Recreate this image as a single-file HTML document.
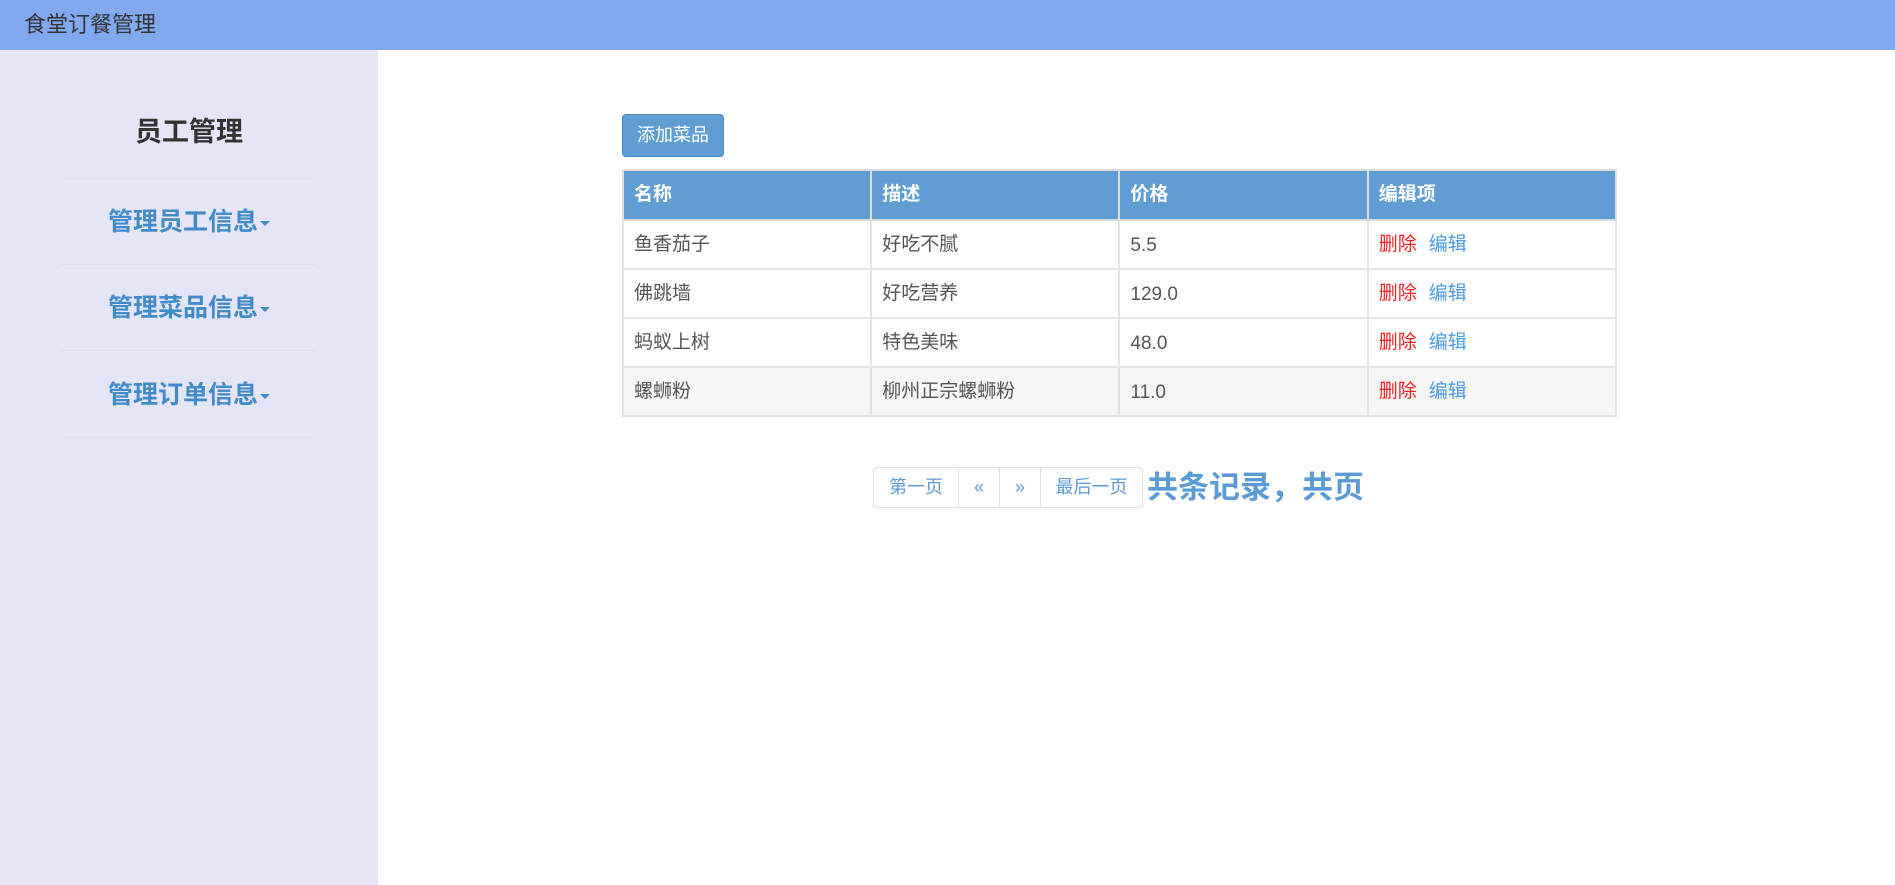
<!DOCTYPE html>
<html><head><meta charset="utf-8"><style>
*{margin:0;padding:0;box-sizing:border-box}
body{width:1895px;height:885px;overflow:hidden;background:#fff;font-family:"Liberation Sans","Noto Sans CJK SC",sans-serif;position:relative}
.hdr{position:absolute;left:0;top:0;width:1895px;height:50px;background:#82a8ef}
.hdr span{position:absolute;left:24px;top:11px;font-size:22px;color:#333;line-height:28px}
.side{position:absolute;left:0;top:50px;width:378px;height:835px;background:#e5e5f8}
.t{position:absolute;left:0;width:378px;text-align:center;font-size:27px;font-weight:bold;color:#333;line-height:36px}
.ln{position:absolute;left:61px;width:254px;height:1px;background:#dcdcef}
.nav{position:absolute;left:0;width:378px;text-align:center;font-size:25px;font-weight:bold;color:#428bca;line-height:34px}
.caret{display:inline-block;width:0;height:0;border-left:5px solid transparent;border-right:5px solid transparent;border-top:5px solid #428bca;vertical-align:middle;margin-left:2px}
.btn{position:absolute;left:622px;top:114px;width:102px;height:43px;background:#5f9dd3;border:1px solid #4a8ac4;border-radius:4px;color:#fff;font-size:18px;line-height:41px;text-align:center}
table{position:absolute;left:622px;top:169px;width:995px;border-collapse:collapse;border:2px solid #ddd;font-size:19px}
th{background:#5f9dd3;color:#fff;text-align:left;font-weight:bold;height:50px;padding:0 10px;border:2px solid #ddd;border-top:0;line-height:24px}
td{height:49px;padding:0 10px;border:2px solid #e4e4e4;color:#555;width:249px;line-height:24px;vertical-align:middle}
td.n{padding-top:3px}
tr.g td{background:#f6f6f6}
.d{color:#f22}.e{color:#4a9be8;margin-left:12px}
.pg{position:absolute;left:873px;top:467px;height:41px;display:flex;border:1px solid #ddd;border-radius:4px;font-size:18px;color:#5b9bd5}
.pg div{line-height:39px;text-align:center;border-left:1px solid #ddd}
.pg div:first-child{border-left:0}
.tot{position:absolute;left:1147px;top:468px;font-size:31px;font-weight:bold;color:#5b9bd5;line-height:40px}
</style></head><body>
<div class="hdr"><span>食堂订餐管理</span></div>
<div class="side">
<div class="t" style="top:64px">员工管理</div>
<div class="ln" style="top:128px"></div>
<div class="nav" style="top:155px">管理员工信息<span class="caret"></span></div>
<div class="ln" style="top:214px"></div>
<div class="nav" style="top:241px">管理菜品信息<span class="caret"></span></div>
<div class="ln" style="top:300px"></div>
<div class="nav" style="top:328px">管理订单信息<span class="caret"></span></div>
<div class="ln" style="top:387px"></div>
</div>
<div class="btn">添加菜品</div>
<table>
<tr><th>名称</th><th>描述</th><th>价格</th><th>编辑项</th></tr>
<tr><td>鱼香茄子</td><td>好吃不腻</td><td class="n">5.5</td><td><span class="d">删除</span><span class="e">编辑</span></td></tr>
<tr><td>佛跳墙</td><td>好吃营养</td><td class="n">129.0</td><td><span class="d">删除</span><span class="e">编辑</span></td></tr>
<tr><td>蚂蚁上树</td><td>特色美味</td><td class="n">48.0</td><td><span class="d">删除</span><span class="e">编辑</span></td></tr>
<tr class="g"><td>螺蛳粉</td><td>柳州正宗螺蛳粉</td><td class="n">11.0</td><td><span class="d">删除</span><span class="e">编辑</span></td></tr>
</table>
<div class="pg"><div style="width:84px">第一页</div><div style="width:41px">«</div><div style="width:41px">»</div><div style="width:102px">最后一页</div></div>
<div class="tot">共条记录，共页</div>
</body></html>
